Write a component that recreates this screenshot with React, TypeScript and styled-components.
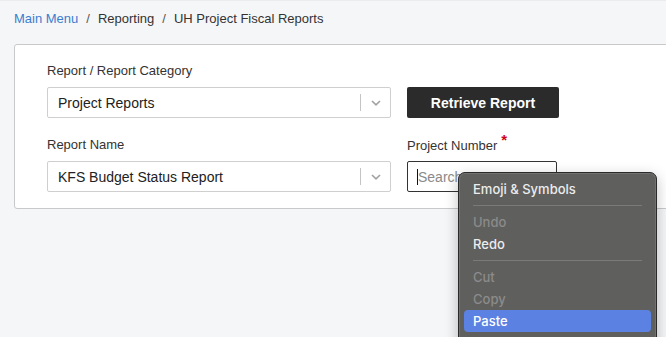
import React from "react"
import styled, { createGlobalStyle } from "styled-components"

const GlobalStyle = createGlobalStyle`
  html, body {
    margin: 0;
    padding: 0;
    background: #f5f6f8;
    font-family: "Liberation Sans", Arial, sans-serif;
    color: #333;
    overflow: hidden;
  }
`

const Page = styled.div`
  position: relative;
  width: 666px;
  height: 337px;
  overflow: hidden;
  border-top: 1px solid #ececee;
  box-sizing: border-box;
`

const Breadcrumbs = styled.nav`
  display: flex;
  align-items: center;
  gap: 8px;
  height: 34px;
  padding: 1px 0 0 14px;
  box-sizing: border-box;
  font-size: 13px;
  color: #333;
`

const Crumb = styled.span<{ $link?: boolean }>`
  color: ${(p) => (p.$link ? "#3b7dd1" : "#333")};
`

const Sep = styled.span`
  color: #555;
`

const Card = styled.section`
  margin: 9px 0 0 14px;
  width: 720px;
  background: #fff;
  border: 1px solid #c9c9c9;
  border-radius: 3px;
  padding: 18px 0 16px 32px;
  box-sizing: border-box;
  display: grid;
  grid-template-columns: 344px 152px;
  column-gap: 16px;
  row-gap: 19px;
`

const Field = styled.div`
  display: flex;
  flex-direction: column;
`

const Label = styled.label`
  font-size: 13px;
  line-height: 16px;
  height: 16px;
  margin-bottom: 8px;
  color: #333;
`

const Required = styled.span`
  color: #d0021b;
  font-size: 15px;
  font-weight: bold;
  position: relative;
  top: -5px;
  margin-left: 4px;
`

const Select = styled.div`
  display: flex;
  align-items: center;
  height: 31px;
  border: 1px solid #cfcfcf;
  border-radius: 2px;
  box-sizing: border-box;
  padding-left: 10px;
  font-size: 14px;
  color: #222;
`

const SelectValue = styled.span`
  flex: 1;
`

const Divider = styled.span`
  width: 1px;
  height: 17px;
  background: #c4c4c4;
`

const Chevron = styled.span`
  display: flex;
  align-items: center;
  justify-content: center;
  width: 29px;
  color: #a3a3a3;
`

const Button = styled.button`
  height: 31px;
  width: 152px;
  margin-top: 24px;
  background: #2b2b2b;
  border: none;
  border-radius: 2px;
  color: #fff;
  font-family: "Liberation Sans", Arial, sans-serif;
  font-weight: bold;
  font-size: 14px;
  padding: 0;
`

const InputBox = styled.div`
  position: relative;
  width: 150px;
`

const Input = styled.input`
  width: 150px;
  height: 31px;
  box-sizing: border-box;
  border: 1px solid #333;
  border-radius: 2px;
  padding: 0 0 0 10px;
  font-family: "Liberation Sans", Arial, sans-serif;
  font-size: 14px;
  outline: none;
  &::placeholder {
    color: #8a8a8a;
  }
`

const Caret = styled.span`
  position: absolute;
  left: 10px;
  top: 8px;
  width: 1px;
  height: 16px;
  background: #111;
`

const Menu = styled.div`
  position: absolute;
  left: 458px;
  top: 171px;
  width: 199px;
  height: 190px;
  box-sizing: border-box;
  background: #5f5f5e;
  border: 1px solid #2a2a2a;
  border-radius: 7px;
  box-shadow: inset 0 0 0 1px rgba(255, 255, 255, 0.12), 0 4px 14px rgba(0, 0, 0, 0.25);
  padding: 5px;
  font-family: Inter, "Noto Sans", sans-serif;
  font-size: 13px;
  font-weight: 500;
`

const Item = styled.div<{ $disabled?: boolean; $active?: boolean }>`
  height: 22px;
  line-height: 22px;
  padding-left: 9px;
  border-radius: 4px;
  color: ${(p) => (p.$disabled ? "#8b8b8a" : "#ececec")};
  background: ${(p) => (p.$active ? "#5b82e2" : "transparent")};
  ${(p) => p.$active && "color: #fff;"}
`

const MenuSep = styled.div`
  height: 1px;
  background: #7a7a79;
  margin: 5px 9px 5px 9px;
`

function ChevronIcon() {
  return (
    <svg width="10" height="6" viewBox="0 0 10 6">
      <path d="M1 1 L5 4.8 L9 1" fill="none" stroke="currentColor" strokeWidth="1.7" />
    </svg>
  )
}

export default function App() {
  return (
    <Page>
      <GlobalStyle />
      <Breadcrumbs>
        <Crumb $link>Main Menu</Crumb>
        <Sep>/</Sep>
        <Crumb>Reporting</Crumb>
        <Sep>/</Sep>
        <Crumb>UH Project Fiscal Reports</Crumb>
      </Breadcrumbs>
      <Card>
        <Field>
          <Label>Report / Report Category</Label>
          <Select>
            <SelectValue>Project Reports</SelectValue>
            <Divider />
            <Chevron>
              <ChevronIcon />
            </Chevron>
          </Select>
        </Field>
        <Field>
          <Button>Retrieve Report</Button>
        </Field>
        <Field>
          <Label>Report Name</Label>
          <Select>
            <SelectValue>KFS Budget Status Report</SelectValue>
            <Divider />
            <Chevron>
              <ChevronIcon />
            </Chevron>
          </Select>
        </Field>
        <Field>
          <Label>
            Project Number<Required>*</Required>
          </Label>
          <InputBox>
            <Input placeholder="Search" />
            <Caret />
          </InputBox>
        </Field>
      </Card>
      <Menu>
        <Item>Emoji &amp; Symbols</Item>
        <MenuSep />
        <Item $disabled>Undo</Item>
        <Item>Redo</Item>
        <MenuSep />
        <Item $disabled>Cut</Item>
        <Item $disabled>Copy</Item>
        <Item $active>Paste</Item>
      </Menu>
    </Page>
  )
}
